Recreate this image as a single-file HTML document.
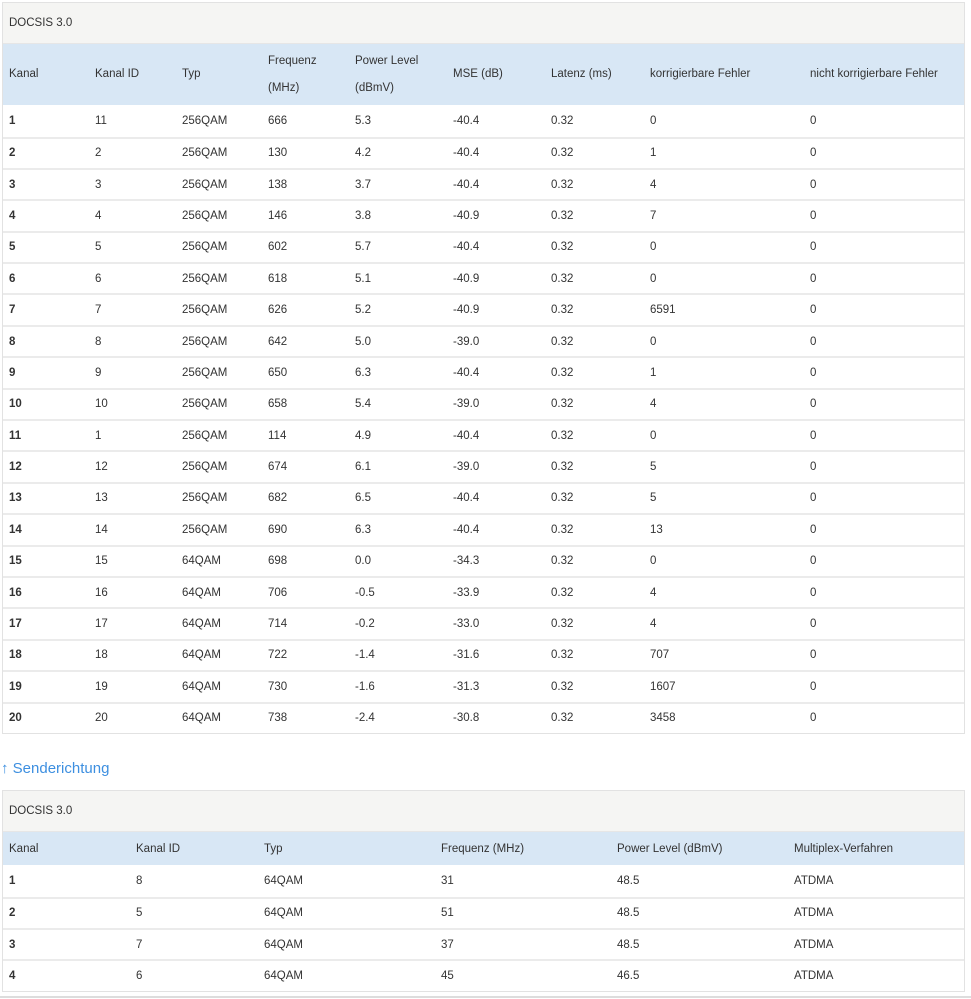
<!DOCTYPE html>
<html><head><meta charset="utf-8"><style>
body{margin:0;background:#fff;font-family:"Liberation Sans",sans-serif;font-size:11.5px;color:#333;width:971px;height:999px;overflow:hidden;position:relative}
.box{position:absolute;left:2px;width:961px;border:1px solid #e2e2e2;background:#fff}
.title{background:#f5f5f3;height:40px;line-height:41px;padding-left:6px;border-bottom:1px solid #e6e6e6}
table{border-collapse:collapse;table-layout:fixed;width:961px}
td,th{padding:0 0 0 6px;text-align:left;font-weight:normal;white-space:nowrap}
thead th{background:#d8e7f5}
tbody td{height:29.4px;border-top:2px solid #ebebeb}
tbody tr:first-child td{border-top:none;height:31.5px}
tbody td:first-child{font-weight:bold}
.h1 th{height:61px;line-height:27px}
.h2 th{height:33px}
.link{position:absolute;left:1px;top:760px;font-size:15px;color:#3d8fe0}
.bot{position:absolute;left:0;top:996px;width:971px;height:2px;background:#ddd}
</style></head><body>
<div class="box" style="top:2px">
<div class="title">DOCSIS 3.0</div>
<table>
<colgroup><col style="width:86px"><col style="width:87px"><col style="width:86px"><col style="width:87px"><col style="width:98px"><col style="width:98px"><col style="width:99px"><col style="width:160px"><col></colgroup>
<thead><tr class="h1"><th>Kanal</th><th>Kanal ID</th><th>Typ</th><th>Frequenz<br>(MHz)</th><th>Power Level<br>(dBmV)</th><th>MSE (dB)</th><th>Latenz (ms)</th><th>korrigierbare Fehler</th><th>nicht korrigierbare Fehler</th></tr></thead>
<tbody>
<tr><td>1</td><td>11</td><td>256QAM</td><td>666</td><td>5.3</td><td>-40.4</td><td>0.32</td><td>0</td><td>0</td></tr>
<tr><td>2</td><td>2</td><td>256QAM</td><td>130</td><td>4.2</td><td>-40.4</td><td>0.32</td><td>1</td><td>0</td></tr>
<tr><td>3</td><td>3</td><td>256QAM</td><td>138</td><td>3.7</td><td>-40.4</td><td>0.32</td><td>4</td><td>0</td></tr>
<tr><td>4</td><td>4</td><td>256QAM</td><td>146</td><td>3.8</td><td>-40.9</td><td>0.32</td><td>7</td><td>0</td></tr>
<tr><td>5</td><td>5</td><td>256QAM</td><td>602</td><td>5.7</td><td>-40.4</td><td>0.32</td><td>0</td><td>0</td></tr>
<tr><td>6</td><td>6</td><td>256QAM</td><td>618</td><td>5.1</td><td>-40.9</td><td>0.32</td><td>0</td><td>0</td></tr>
<tr><td>7</td><td>7</td><td>256QAM</td><td>626</td><td>5.2</td><td>-40.9</td><td>0.32</td><td>6591</td><td>0</td></tr>
<tr><td>8</td><td>8</td><td>256QAM</td><td>642</td><td>5.0</td><td>-39.0</td><td>0.32</td><td>0</td><td>0</td></tr>
<tr><td>9</td><td>9</td><td>256QAM</td><td>650</td><td>6.3</td><td>-40.4</td><td>0.32</td><td>1</td><td>0</td></tr>
<tr><td>10</td><td>10</td><td>256QAM</td><td>658</td><td>5.4</td><td>-39.0</td><td>0.32</td><td>4</td><td>0</td></tr>
<tr><td>11</td><td>1</td><td>256QAM</td><td>114</td><td>4.9</td><td>-40.4</td><td>0.32</td><td>0</td><td>0</td></tr>
<tr><td>12</td><td>12</td><td>256QAM</td><td>674</td><td>6.1</td><td>-39.0</td><td>0.32</td><td>5</td><td>0</td></tr>
<tr><td>13</td><td>13</td><td>256QAM</td><td>682</td><td>6.5</td><td>-40.4</td><td>0.32</td><td>5</td><td>0</td></tr>
<tr><td>14</td><td>14</td><td>256QAM</td><td>690</td><td>6.3</td><td>-40.4</td><td>0.32</td><td>13</td><td>0</td></tr>
<tr><td>15</td><td>15</td><td>64QAM</td><td>698</td><td>0.0</td><td>-34.3</td><td>0.32</td><td>0</td><td>0</td></tr>
<tr><td>16</td><td>16</td><td>64QAM</td><td>706</td><td>-0.5</td><td>-33.9</td><td>0.32</td><td>4</td><td>0</td></tr>
<tr><td>17</td><td>17</td><td>64QAM</td><td>714</td><td>-0.2</td><td>-33.0</td><td>0.32</td><td>4</td><td>0</td></tr>
<tr><td>18</td><td>18</td><td>64QAM</td><td>722</td><td>-1.4</td><td>-31.6</td><td>0.32</td><td>707</td><td>0</td></tr>
<tr><td>19</td><td>19</td><td>64QAM</td><td>730</td><td>-1.6</td><td>-31.3</td><td>0.32</td><td>1607</td><td>0</td></tr>
<tr><td>20</td><td>20</td><td>64QAM</td><td>738</td><td>-2.4</td><td>-30.8</td><td>0.32</td><td>3458</td><td>0</td></tr>
</tbody></table></div>
<div class="link">↑ Senderichtung</div>
<div class="box" style="top:790px">
<div class="title">DOCSIS 3.0</div>
<table>
<colgroup><col style="width:127px"><col style="width:128px"><col style="width:177px"><col style="width:176px"><col style="width:177px"><col></colgroup>
<thead><tr class="h2"><th>Kanal</th><th>Kanal ID</th><th>Typ</th><th>Frequenz (MHz)</th><th>Power Level (dBmV)</th><th>Multiplex-Verfahren</th></tr></thead>
<tbody>
<tr><td>1</td><td>8</td><td>64QAM</td><td>31</td><td>48.5</td><td>ATDMA</td></tr>
<tr><td>2</td><td>5</td><td>64QAM</td><td>51</td><td>48.5</td><td>ATDMA</td></tr>
<tr><td>3</td><td>7</td><td>64QAM</td><td>37</td><td>48.5</td><td>ATDMA</td></tr>
<tr><td>4</td><td>6</td><td>64QAM</td><td>45</td><td>46.5</td><td>ATDMA</td></tr>
</tbody></table></div>
<div class="bot"></div>
</body></html>
